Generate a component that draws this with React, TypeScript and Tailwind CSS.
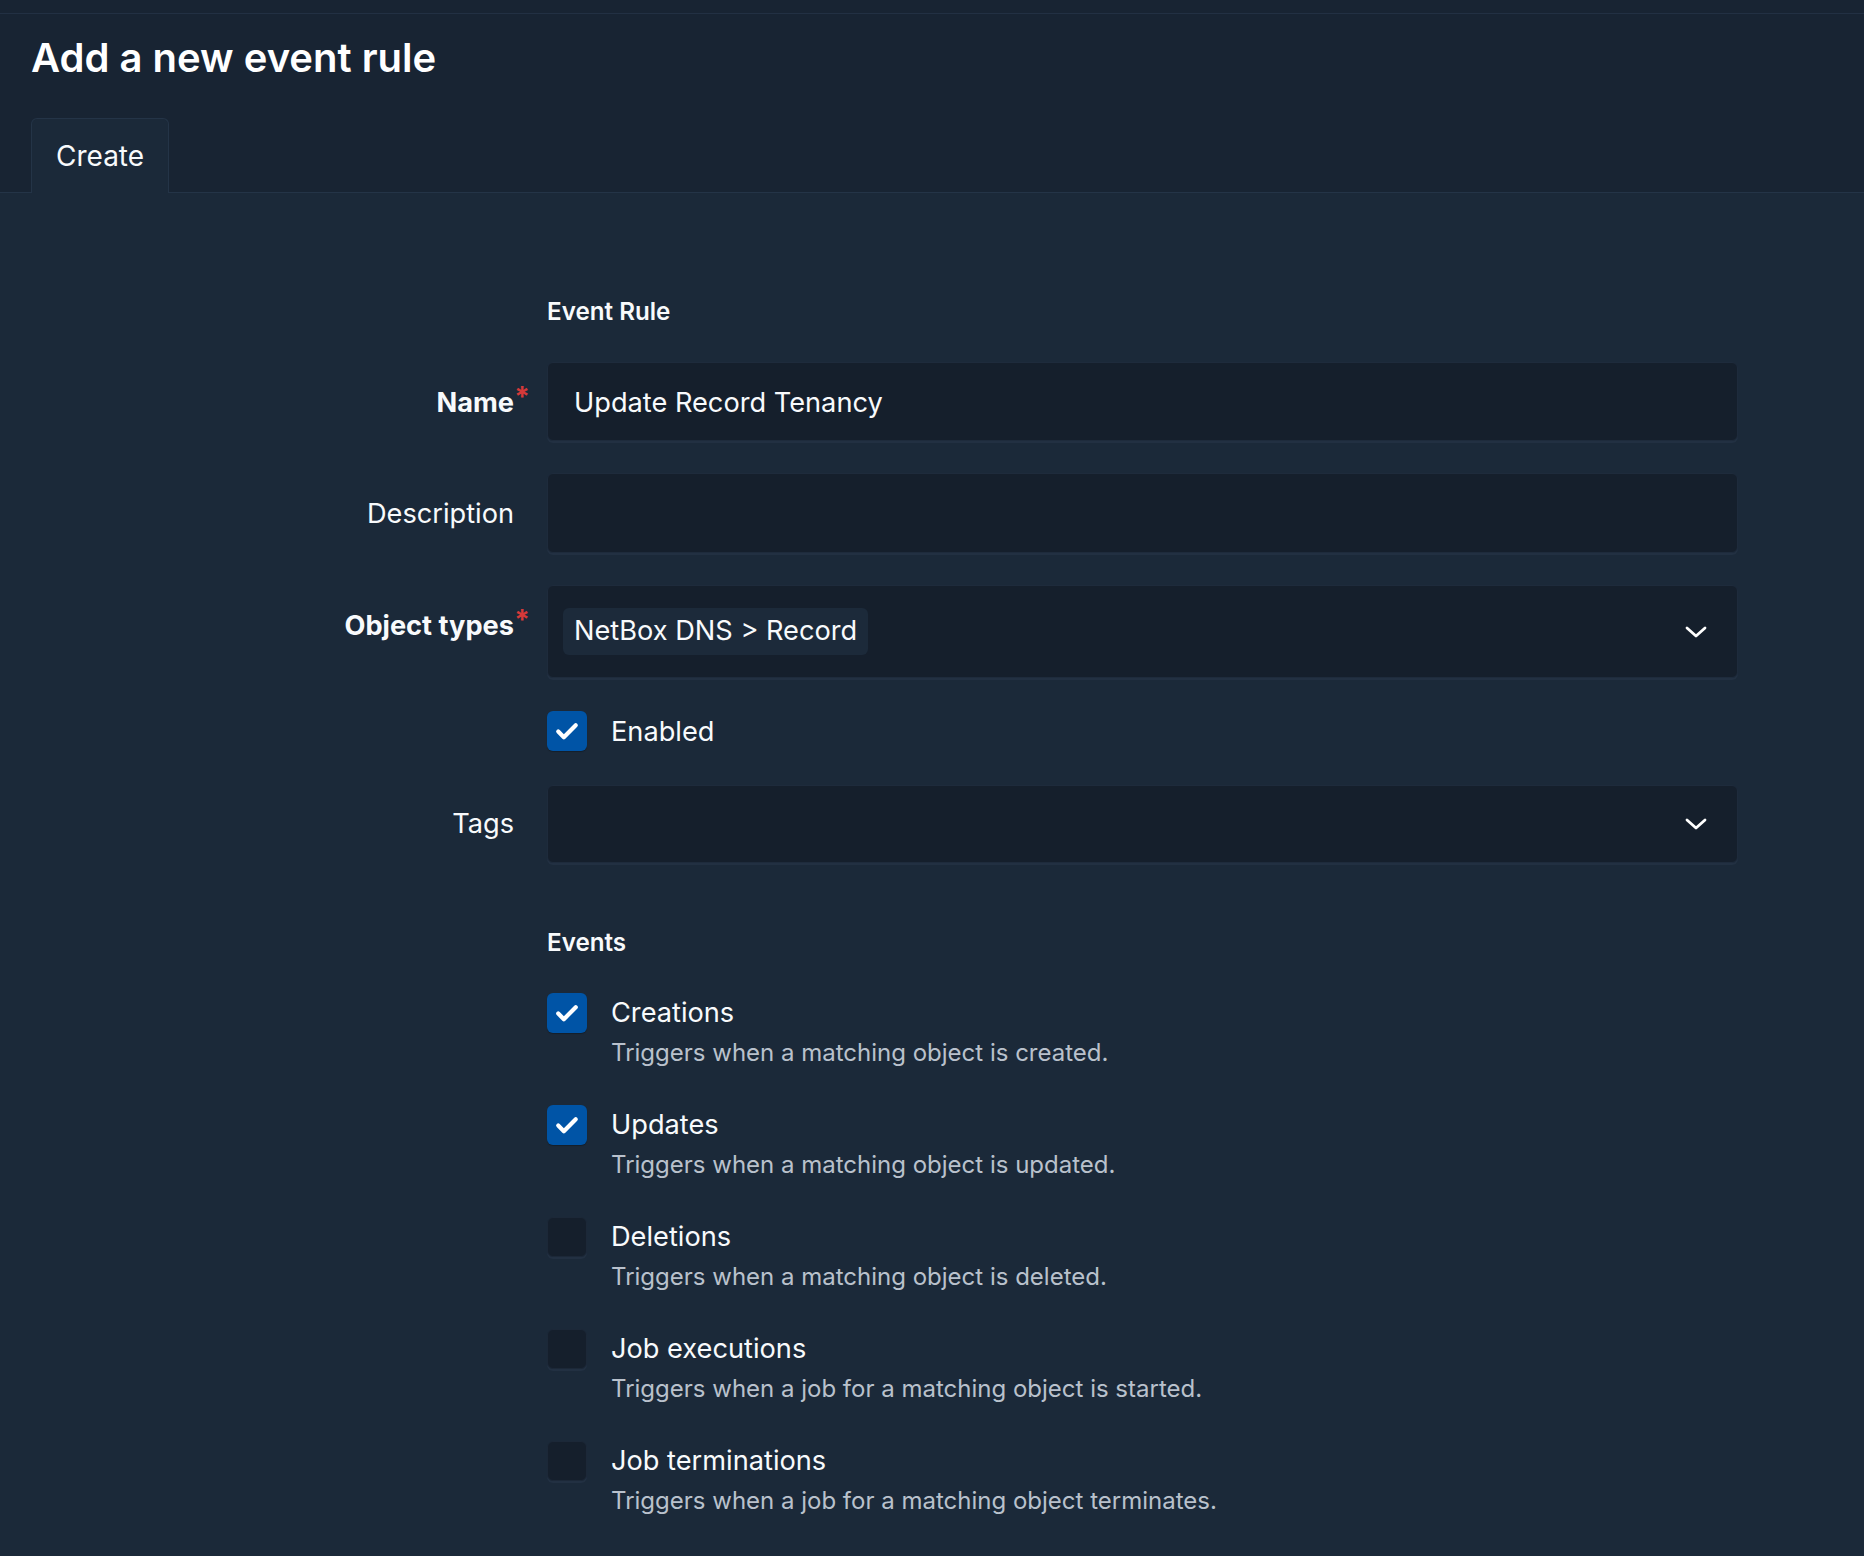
import React from "react";

const events = [
  { label: "Creations", help: "Triggers when a matching object is created.", checked: true },
  { label: "Updates", help: "Triggers when a matching object is updated.", checked: true },
  { label: "Deletions", help: "Triggers when a matching object is deleted.", checked: false },
  { label: "Job executions", help: "Triggers when a job for a matching object is started.", checked: false },
  { label: "Job terminations", help: "Triggers when a job for a matching object terminates.", checked: false },
];

const Checkbox = ({ checked }: { checked: boolean }) =>
  checked ? (
    <span className="flex h-[40px] w-[40px] shrink-0 items-center justify-center rounded-[6px] bg-[#0054a6] shadow-[0_1px_1px_rgba(0,0,0,0.25)]">
      <svg width="28" height="28" viewBox="0 0 24 24" fill="none">
        <path d="M4.5 12.5l4.8 4.8L19.5 7" stroke="#fff" strokeWidth="3.6" strokeLinecap="round" strokeLinejoin="round" />
      </svg>
    </span>
  ) : (
    <span className="block h-[40px] w-[40px] shrink-0 rounded-[6px] border border-[#1c2838] bg-[#151f2c] shadow-[0_2px_0_#223042]" />
  );

const Chevron = () => (
  <svg width="22" height="12" viewBox="0 0 22 12" fill="none">
    <path d="M2 2l9 8 9-8" stroke="#fff" strokeWidth="2.8" strokeLinecap="round" strokeLinejoin="round" />
  </svg>
);

const Row = ({
  label,
  required,
  children,
}: {
  label?: string;
  required?: boolean;
  children: React.ReactNode;
}) => (
  <div className="flex items-start">
    <div className="w-[514px] shrink-0 pt-[21px] text-right">
      {label && (
        <span className={`relative leading-[40px] ${required ? "font-bold" : ""}`}>
          {label}
          {required && (
            <span className="absolute -right-[16px] -top-[9px] text-[28px] font-bold text-[#d63939]">*</span>
          )}
        </span>
      )}
    </div>
    <div className="ml-[33px] w-[1191px]">{children}</div>
  </div>
);

const inputBox =
  "rounded-[6px] border border-[#1e2b3c] bg-[#151f2c] shadow-[0_2px_0_#223042]";

export default function App() {
  return (
    <div className="min-h-screen bg-[#1b2939] font-['Inter',sans-serif] text-[27.2px] text-[#f8fafc]">
      <div className="bg-[#182433] pt-[13px]">
        <div className="border-t border-[#223043] px-[31px] pt-[20px]">
          <h1 className="text-[40px] font-semibold leading-[48px] text-white">Add a new event rule</h1>
          <div className="mt-[36px] flex">
            <div className="-mb-px flex h-[75px] items-center rounded-t-[6px] border border-b-0 border-[#243447] bg-[#1b2939] px-[24px] text-[28px]">
              Create
            </div>
          </div>
        </div>
        <div className="border-b border-[#243447]" />
      </div>

      <div className="pt-[105px] pb-[40px]">
        <div className="ml-[547px] text-[24.2px] font-semibold leading-[28px]">Event Rule</div>

        <div className="mt-[36px] flex flex-col gap-[32px]">
          <Row label="Name" required>
            <div className={`${inputBox} flex h-[79px] items-center px-[26px] pt-[4px]`}>Update Record Tenancy</div>
          </Row>
          <Row label="Description">
            <div className={`${inputBox} h-[80px]`} />
          </Row>
          <Row label="Object types" required>
            <div className={`${inputBox} flex h-[93px] items-center justify-between pl-[15px] pr-[30px]`}>
              <span className="flex h-[47px] items-center rounded-[6px] bg-[#1c2a3a] px-[11px]">
                NetBox DNS &gt; Record
              </span>
              <Chevron />
            </div>
          </Row>
          <Row>
            <div className="mt-[1px] flex h-[40px] items-center gap-[24px]">
              <Checkbox checked />
              <span className="pt-[3px]">Enabled</span>
            </div>
          </Row>
          <Row label="Tags">
            <div className={`${inputBox} mt-[2px] flex h-[78px] items-center justify-end pr-[30px]`}>
              <Chevron />
            </div>
          </Row>
        </div>

        <div className="ml-[547px] mt-[66px] text-[24.2px] font-semibold leading-[28px]">Events</div>

        <div className="ml-[547px] mt-[36px] flex flex-col gap-[35px]">
          {events.map((e) => (
            <div key={e.label}>
              <div className="flex h-[40px] items-center gap-[24px]">
                <Checkbox checked={e.checked} />
                <span>{e.label}</span>
              </div>
              <div className="ml-[64px] mt-[3px] text-[24px] leading-[34px] text-[#b9c1cc]">{e.help}</div>
            </div>
          ))}
        </div>
      </div>
    </div>
  );
}
